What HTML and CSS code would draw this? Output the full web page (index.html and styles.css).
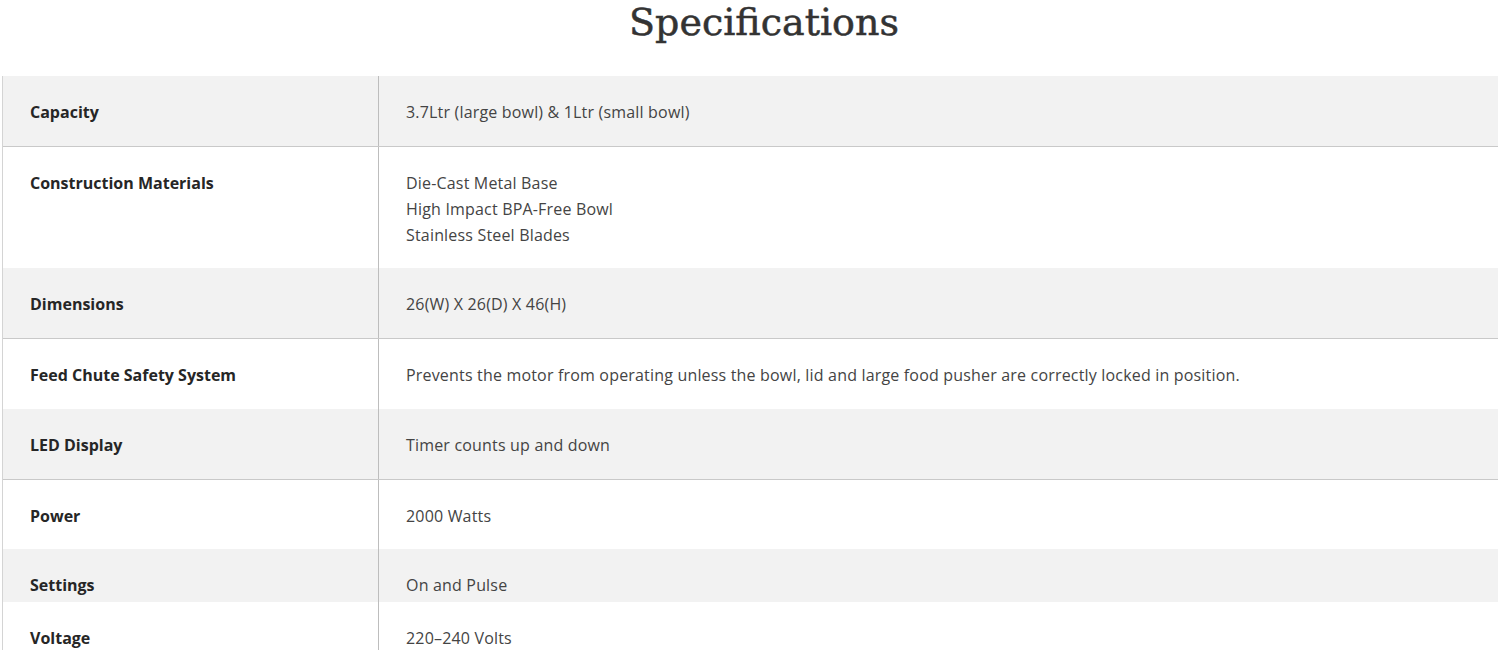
FILE: index.html
```html
<!DOCTYPE html>
<html>
<head>
<meta charset="utf-8">
<link rel="stylesheet" href="styles.css">
</head>
<body>
<h1 class="title">Specifications</h1>
<div class="specs">
  <div class="row gray bordered"><div class="label">Capacity</div><div class="value">3.7Ltr (large bowl) &amp; 1Ltr (small bowl)</div></div>
  <div class="row tall"><div class="label">Construction Materials</div><div class="value">Die-Cast Metal Base<br>High Impact BPA-Free Bowl<br>Stainless Steel Blades</div></div>
  <div class="row gray bordered"><div class="label">Dimensions</div><div class="value">26(W) X 26(D) X 46(H)</div></div>
  <div class="row"><div class="label">Feed Chute Safety System</div><div class="value">Prevents the motor from operating unless the bowl, lid and large food pusher are correctly locked in position.</div></div>
  <div class="row gray bordered"><div class="label">LED Display</div><div class="value">Timer counts up and down</div></div>
  <div class="row short"><div class="label">Power</div><div class="value">2000 Watts</div></div>
  <div class="row gray cut"><div class="label">Settings</div><div class="value">On and Pulse</div></div>
  <div class="row"><div class="label">Voltage</div><div class="value">220–240 Volts</div></div>
</div>
</body>
</html>
```
FILE: styles.css
```css
html, body {
  margin: 0;
  padding: 0;
  background: #ffffff;
}
body {
  width: 1500px;
  height: 650px;
  overflow: hidden;
  font-family: "Open Sans", "Noto Sans", sans-serif;
  color: #333333;
}
.title {
  margin: 0;
  height: 76px;
  box-sizing: border-box;
  padding: 0 0 0 28px;
  text-align: center;
  font-family: "DejaVu Serif", serif;
  font-weight: normal;
  font-size: 38px;
  line-height: 44px;
  color: #333333;
  -webkit-text-stroke: 0.5px #333333;
}
.specs {
  margin-left: 2px;
  width: 1495px;
  border-left: 1px solid #d4d4d4;
}
.row {
  display: grid;
  grid-template-columns: 376px 1fr;
}
.row.gray {
  background: #f2f2f2;
}
.row.bordered {
  border-bottom: 1px solid #c9c9c9;
}
.label, .value {
  padding: 23px 27px 21px;
  font-size: 16px;
  line-height: 26px;
}
.label {
  font-weight: 700;
  color: #262626;
  border-right: 1px solid #bdbdbd;
}
.value {
  color: #444444;
  letter-spacing: 0.18px;
}
.row.tall .label, .row.tall .value {
  padding-bottom: 20px;
}
.row.short .label, .row.short .value {
  padding-bottom: 20px;
}
.row.cut .label, .row.cut .value {
  padding-top: 23px;
  padding-bottom: 4px;
}
```
